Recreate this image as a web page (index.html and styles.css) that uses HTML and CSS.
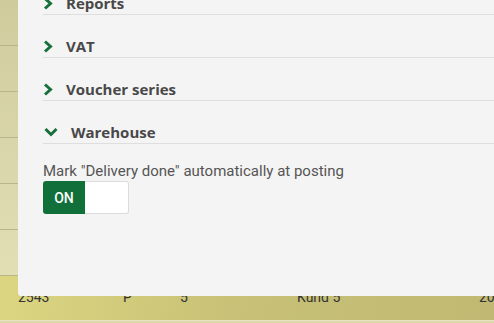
FILE: index.html
```html
<!DOCTYPE html>
<html>
<head>
<meta charset="utf-8">
<link rel="stylesheet" href="styles.css">
</head>
<body>
<div class="table">
  <div class="row"></div>
  <div class="row"></div>
  <div class="row"></div>
  <div class="row"></div>
  <div class="row"></div>
  <div class="row"></div>
  <div class="row data">
    <span class="c1">2543</span>
    <span class="c2">P</span>
    <span class="c3">5</span>
    <span class="c4">Kund 5</span>
    <span class="c5">2020-01-01</span>
  </div>
  <div class="row foot"></div>
</div>

<div class="panel">
  <div class="section">
    <div class="head">
      <svg class="chev" viewBox="0 0 10 13" width="10" height="13"><path d="M2 1.5 L7.5 6.5 L2 11.5" fill="none" stroke="#17703b" stroke-width="3"/></svg>
      <span>Reports</span>
    </div>
  </div>
  <div class="section">
    <div class="head">
      <svg class="chev" viewBox="0 0 10 13" width="10" height="13"><path d="M2 1.5 L7.5 6.5 L2 11.5" fill="none" stroke="#17703b" stroke-width="3"/></svg>
      <span>VAT</span>
    </div>
  </div>
  <div class="section">
    <div class="head">
      <svg class="chev" viewBox="0 0 10 13" width="10" height="13"><path d="M2 1.5 L7.5 6.5 L2 11.5" fill="none" stroke="#17703b" stroke-width="3"/></svg>
      <span>Voucher series</span>
    </div>
  </div>
  <div class="section open">
    <div class="head">
      <svg class="chev down" viewBox="0 0 14 10" width="14" height="10"><path d="M1.5 2 L7 7.5 L12.5 2" fill="none" stroke="#17703b" stroke-width="3"/></svg>
      <span>Warehouse</span>
    </div>
    <div class="body">
      <div class="label">Mark "Delivery done" automatically at posting</div>
      <div class="toggle">
        <div class="on">ON</div>
        <div class="off"></div>
      </div>
    </div>
  </div>
</div>
</body>
</html>
```
FILE: styles.css
```css
html, body {
  margin: 0;
  padding: 0;
  width: 494px;
  height: 323px;
  overflow: hidden;
}
body {
  position: relative;
  font-family: Roboto, "Liberation Sans", sans-serif;
}
.table {
  background: linear-gradient(180deg, #cfcb9d 0%, #e4e1b8 85%);
}
.row {
  height: 45px;
  border-bottom: 1px solid #b9b58a;
  box-sizing: content-box;
}
.row.data {
  height: 44px;
  border-bottom: 1px solid #e6e3c2;
  background: linear-gradient(100deg, #dcd681 0%, #c7c076 50%, #c1b973 100%);
  position: relative;
  font-size: 14px;
  color: #333;
  white-space: nowrap;
}
.row.data span {
  position: absolute;
  top: 13px;
}
.c1 { left: 18px; }
.c2 { left: 123px; }
.c3 { left: 180px; }
.c4 { left: 297px; }
.c5 { left: 479px; }
.row.foot {
  height: 40px;
  border: 0;
  background: #ddd9a8;
}
.panel {
  position: absolute;
  left: 18px;
  top: -8px;
  width: 490px;
  height: 304px;
  background: #f4f4f4;
  box-sizing: border-box;
  padding: 0 0 0 25px;
  border-radius: 3px;
}
.section {
  border-bottom: 1px solid #dedede;
  margin-bottom: 20px;
}
.head {
  display: flex;
  align-items: center;
  height: 22px;
  font-family: "Open Sans", sans-serif;
  font-weight: 700;
  font-size: 15px;
  color: #484848;
}
.chev {
  margin-left: 0;
  margin-right: 13px;
}
.chev.down {
  margin-left: 1px;
  margin-right: 13px;
}
.section.open {
  border-bottom: none;
}
.section.open .head {
  border-bottom: 1px solid #dedede;
}
.body {
  padding-top: 18px;
}
.label {
  font-size: 15px;
  color: #555;
  line-height: 18px;
}
.toggle {
  display: flex;
  margin-top: 1px;
  width: 86px;
  height: 33px;
}
.on {
  width: 42px;
  background: #11703a;
  color: #fff;
  font-weight: 500;
  font-size: 14px;
  display: flex;
  align-items: center;
  justify-content: center;
  border-radius: 3px 0 0 3px;
}
.off {
  flex: 1;
  background: #fff;
  border: 1px solid #dcdcdc;
  border-left: 0;
  border-radius: 0 3px 3px 0;
}
```
